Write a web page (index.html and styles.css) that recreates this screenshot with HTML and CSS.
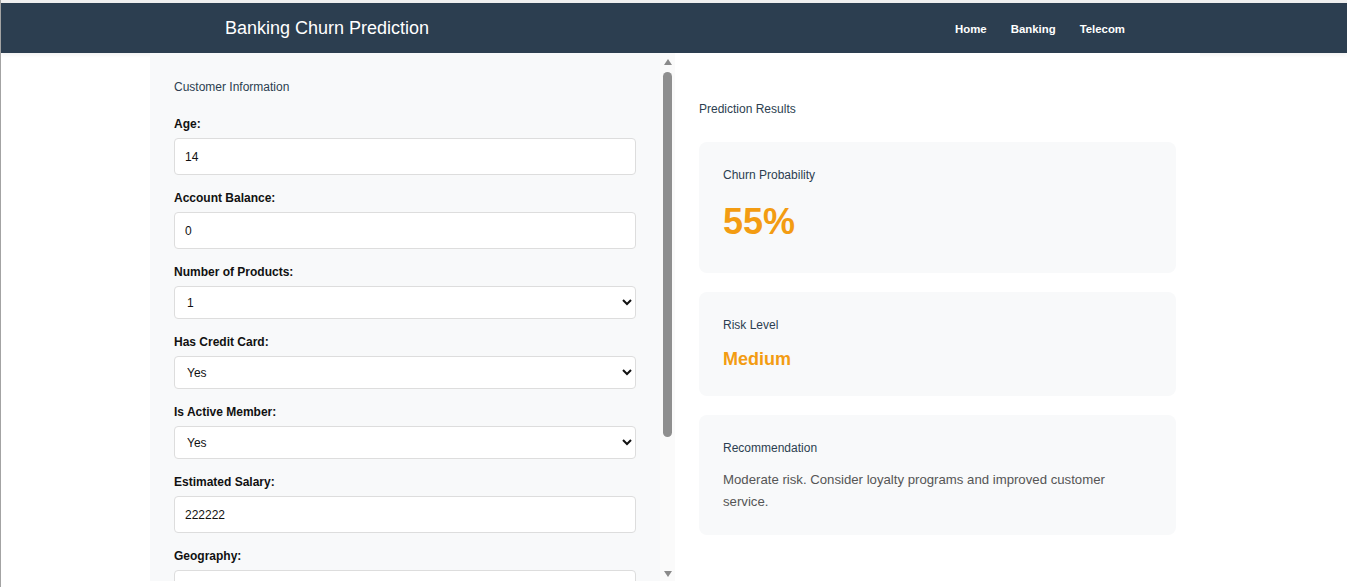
FILE: index.html
```html
<!DOCTYPE html>
<html lang="en">
<head>
<meta charset="utf-8">
<title>Banking Churn Prediction</title>
<link rel="stylesheet" href="styles.css">
</head>
<body>
<div class="topstrip"></div>
<header class="header">
  <div class="header-inner">
    <div class="brand">Banking Churn Prediction</div>
    <nav class="nav">
      <a class="nav-link" href="#">Home</a>
      <a class="nav-link" href="#">Banking</a>
      <a class="nav-link" href="#">Telecom</a>
    </nav>
  </div>
</header>
<main class="main">
  <section class="form-panel">
    <div class="form-scroll">
      <h3 class="section-title">Customer Information</h3>
      <div class="field">
        <label class="field-label">Age:</label>
        <input class="text-input" type="text" value="14">
      </div>
      <div class="field">
        <label class="field-label">Account Balance:</label>
        <input class="text-input" type="text" value="0">
      </div>
      <div class="field">
        <label class="field-label">Number of Products:</label>
        <select class="select-input"><option>1</option><option>2</option><option>3</option><option>4</option></select>
      </div>
      <div class="field">
        <label class="field-label">Has Credit Card:</label>
        <select class="select-input"><option>Yes</option><option>No</option></select>
      </div>
      <div class="field">
        <label class="field-label">Is Active Member:</label>
        <select class="select-input"><option>Yes</option><option>No</option></select>
      </div>
      <div class="field">
        <label class="field-label">Estimated Salary:</label>
        <input class="text-input" type="text" value="222222">
      </div>
      <div class="field">
        <label class="field-label">Geography:</label>
        <select class="select-input tall"><option>France</option><option>Germany</option><option>Spain</option></select>
      </div>
      <div class="field">
        <label class="field-label">Gender:</label>
        <select class="select-input"><option>Male</option><option>Female</option></select>
      </div>
      <button class="predict-btn" type="button">Predict Churn</button>
    </div>
    <div class="scrollbar" aria-hidden="true">
      <div class="sb-btn sb-up"><span class="tri-up"></span></div>
      <div class="sb-track"><div class="sb-thumb"></div></div>
      <div class="sb-btn sb-down"><span class="tri-down"></span></div>
    </div>
  </section>
  <section class="results">
    <h3 class="results-title">Prediction Results</h3>
    <div class="card card-prob">
      <div class="card-label">Churn Probability</div>
      <div class="prob-value">55%</div>
    </div>
    <div class="card card-risk">
      <div class="card-label">Risk Level</div>
      <div class="risk-value">Medium</div>
    </div>
    <div class="card card-rec">
      <div class="card-label">Recommendation</div>
      <p class="rec-text">Moderate risk. Consider loyalty programs and improved customer service.</p>
    </div>
  </section>
</main>
</body>
</html>
```
FILE: styles.css
```css
* { box-sizing: border-box; }
html, body { margin: 0; padding: 0; background: #ffffff; }
body {
  font-family: "Liberation Sans", Arial, sans-serif;
  border-left: 1px solid #a3a3a3;
  padding-left: 2px;
  height: 587px;
  overflow: hidden;
}
.topstrip { height: 3px; background: #efefef; margin-left: -2px; }
.header {
  background: #2c3e50;
  height: 50px;
  margin-left: -2px;
  padding-left: 2px;
  box-shadow: 0 2px 4px rgba(0,0,0,0.06);
}
.header-inner {
  width: 900px;
  margin: 0 auto;
  height: 50px;
  display: flex;
  align-items: center;
  justify-content: space-between;
}
.brand { color: #ffffff; font-size: 18px; line-height: 22px; }
.nav { display: flex; gap: 24px; padding-top: 2px; }
.nav-link { color: #ffffff; text-decoration: none; font-size: 11.4px; font-weight: bold; }
.main {
  width: 1050px;
  margin: 0 auto;
  display: flex;
  height: 528px;
  position: relative;
  background: #ffffff;
}
.form-panel {
  width: 525px;
  height: 528px;
  display: flex;
  background: #f8f9fa;
}
.form-scroll {
  flex: 1;
  min-width: 0;
  overflow: hidden;
  padding: 25px 24px 24px;
}
.scrollbar {
  width: 15px;
  flex: 0 0 15px;
  display: flex;
  flex-direction: column;
  background: #fafafa;
}
.sb-btn {
  height: 15px;
  flex: 0 0 15px;
  display: flex;
  justify-content: center;
  align-items: flex-start;
}
.sb-up { padding-top: 6px; }
.sb-down { padding-top: 5px; }
.tri-up {
  width: 0; height: 0;
  border-left: 4px solid transparent;
  border-right: 4px solid transparent;
  border-bottom: 6px solid #8a8a8a;
}
.tri-down {
  width: 0; height: 0;
  border-left: 4px solid transparent;
  border-right: 4px solid transparent;
  border-top: 6px solid #8a8a8a;
}
.sb-track {
  flex: 1;
  display: flex;
  justify-content: center;
  padding-top: 4px;
}
.sb-thumb {
  width: 9px;
  height: 365px;
  background: #8f8f8f;
  border-radius: 5px;
}
.section-title {
  margin: 0 0 20px;
  font-size: 12px;
  line-height: 18px;
  font-weight: normal;
  color: #2c3e50;
}
.field { margin-bottom: 15px; }
.field-label {
  display: block;
  font-size: 12px;
  line-height: 14px;
  padding-top: 1px;
  font-weight: bold;
  color: #111;
  margin-bottom: 7px;
}
.text-input {
  display: block;
  width: 100%;
  height: 37px;
  border: 1px solid #dddddd;
  border-radius: 4px;
  padding: 0 10px;
  font-family: "Liberation Sans", Arial, sans-serif;
  font-size: 12px;
  color: #111;
  background: #fff;
}
.select-input {
  display: block;
  width: 100%;
  height: 33px;
  border: 1px solid #dddddd;
  border-radius: 4px;
  padding: 0 8px;
  font-family: "Liberation Sans", Arial, sans-serif;
  font-size: 12px;
  color: #111;
  background: #fff;
}
.select-input.tall { height: 37px; }
.predict-btn {
  display: block;
  width: 100%;
  height: 46px;
  margin-top: 20px;
  border: none;
  border-radius: 4px;
  background: #2c3e50;
  color: #fff;
  font-family: "Liberation Sans", Arial, sans-serif;
  font-size: 13px;
}
.results {
  width: 525px;
  padding: 47px 24px 24px;
}
.results-title {
  margin: 0 0 24px;
  font-size: 12px;
  line-height: 18px;
  font-weight: normal;
  color: #2c3e50;
}
.card {
  background: #f8f9fa;
  border-radius: 8px;
  padding: 25px 24px 24px;
  margin-bottom: 19px;
}
.card-label {
  font-size: 12px;
  line-height: 16px;
  color: #2c3e50;
}
.prob-value {
  margin-top: 14px;
  font-size: 36px;
  line-height: 50px;
  font-weight: bold;
  color: #f39c12;
}
.card-prob { padding-bottom: 26px; }
.risk-value {
  margin-top: 15px;
  font-size: 18px;
  line-height: 22px;
  font-weight: bold;
  color: #f39c12;
}
.card-risk { padding-bottom: 26px; }
.rec-text {
  margin: 13px 0 0;
  max-width: 415px;
  font-size: 13.2px;
  line-height: 22px;
  color: #555555;
}
.card-rec { padding-bottom: 22px; }
```
